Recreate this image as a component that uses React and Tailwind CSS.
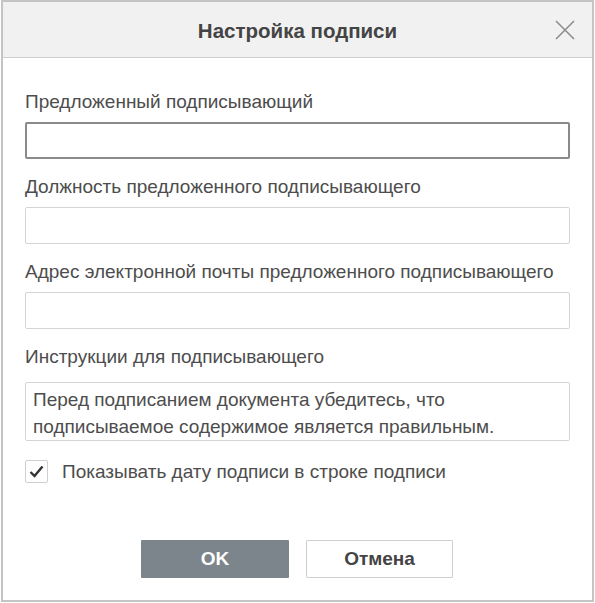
import { useState } from "react"

const fields = [
  { label: "Предложенный подписывающий", focused: true },
  { label: "Должность предложенного подписывающего" },
  { label: "Адрес электронной почты предложенного подписывающего" },
]

const CloseIcon = () => (
  <svg width="20" height="20" viewBox="0 0 20 20" fill="none" stroke="#8a8a8a" strokeWidth="1.5">
    <path d="M1 1 L19 19 M19 1 L1 19" />
  </svg>
)

export default function App() {
  const [showDate, setShowDate] = useState(true)

  return (
    <div className="w-[595px] h-[603px] bg-white" style={{ fontFamily: '"Liberation Sans", Arial, sans-serif' }}>
      <div className="ml-[1px] w-[593px] h-[602px] border-2 border-[#c4c4c4] flex flex-col">
        {/* header */}
        <div className="h-[56px] shrink-0 bg-[#f1f1f1] border-b border-[#cfcfcf] relative flex items-center justify-center pt-[3px]">
          <h1 className="text-[20.5px] font-bold text-[#444]">Настройка подписи</h1>
          <button className="absolute right-[17px] top-[18px]">
            <CloseIcon />
          </button>
        </div>

        {/* body */}
        <div className="flex flex-col px-[22px] pt-[34px] text-[19px] text-[#4d4d4d]">
          {fields.map((f, i) => (
            <div key={i} className="flex flex-col mb-[18px]">
              <label className="leading-[20px] mb-[10px]">{f.label}</label>
              <input
                type="text"
                className={
                  "h-[37px] w-full rounded-[2px] border outline-none px-2 " +
                  (f.focused ? "border-[#8a8a8a] border-2" : "border-[#d4d4d4]")
                }
              />
            </div>
          ))}

          <div className="flex flex-col">
            <label className="leading-[20px] mb-[15px]">Инструкции для подписывающего</label>
            <div className="h-[59px] w-full rounded-[2px] border border-[#d4d4d4] px-[7px] pt-[3px] leading-[27px]">
              Перед подписанием документа убедитесь, что
              <br />
              подписываемое содержимое является правильным.
            </div>
          </div>

          <label className="flex items-center gap-[14px] mt-[19px] cursor-pointer">
            <span
              onClick={() => setShowDate(!showDate)}
              className="w-[23px] h-[23px] rounded-[2px] border border-[#cfcfcf] flex items-center justify-center"
            >
              {showDate && (
                <svg width="15" height="13" viewBox="0 0 15 13" fill="none" stroke="#333" strokeWidth="2.4">
                  <path d="M1.5 7 L5.5 11 L13.5 1.5" />
                </svg>
              )}
            </span>
            <span className="leading-[20px]">Показывать дату подписи в строке подписи</span>
          </label>

          {/* buttons */}
          <div className="flex justify-center gap-[17px] mt-[57px] pr-[1px]">
            <button className="w-[148px] h-[38px] bg-[#7d858c] text-white font-bold text-[19px] rounded-[1px]">
              OK
            </button>
            <button className="w-[147px] h-[38px] bg-white border border-[#cfcfcf] text-[#444] font-bold text-[19px] rounded-[1px]">
              Отмена
            </button>
          </div>
        </div>
      </div>
    </div>
  )
}
